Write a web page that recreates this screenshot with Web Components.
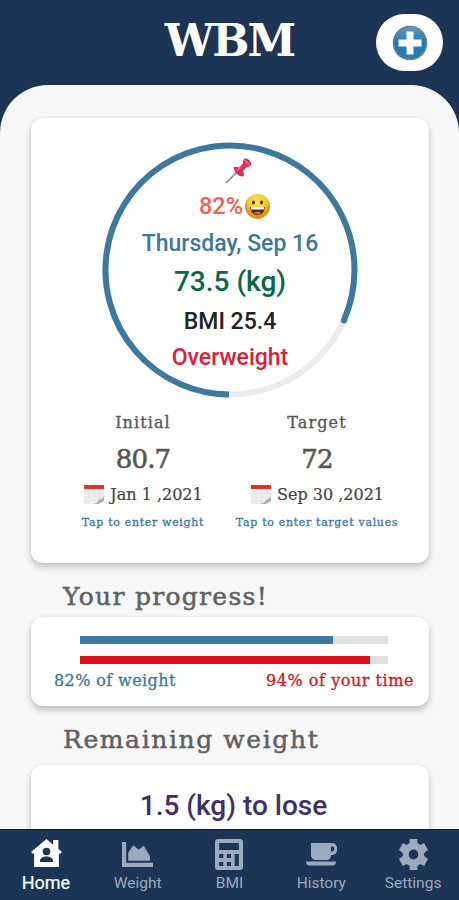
<!DOCTYPE html>
<html lang="en">
<head>
<meta charset="utf-8">
<meta name="viewport" content="width=device-width, initial-scale=1">
<title>WBM</title>
<style>
  body {
    margin: 0;
    font-family: Roboto, "Liberation Sans", sans-serif;
    background: #f7f7f7;
  }
</style>
</head>
<body>
<wbm-app></wbm-app>

<script>
  const SLAB = '"DejaVu Serif", "Liberation Serif", serif';

  const tabs = [
    { label: 'Home', active: true, icon: '<path d="M15 0 0 13l2 2 1-.7V28h24V14.300l1 .7 2-2-3.500-3V1h-5v4.700z"/><circle cx="15" cy="12.500" r="3.700" fill="#1c3557"/><path d="M8.500 23c0-4 3-5.500 6.500-5.500s6.500 1.500 6.500 5.500z" fill="#1c3557"/>', box: '0 0 30 28', w: 31, h: 28 },
    { label: 'Weight', icon: '<path d="M0 0h4v20h26v4H0z"/><path d="M6 18v-8l5-7 5 4.500 5-4 6 10V18z"/>', box: '0 0 30 24', w: 31, h: 25 },
    { label: 'BMI', icon: '<path fill-rule="evenodd" d="M3 0h21q3 0 3 3v25q0 3-3 3H3q-3 0-3-3V3q0-3 3-3zM4 4v7h19V4zM4 15v4h4v-4zm7.500 0v4h4v-4zm7.500 0v12h4V15zM4 23v4h4v-4zm7.500 0v4h4v-4z"/>', box: '0 0 27 31', w: 28, h: 31 },
    { label: 'History', icon: '<path fill-rule="evenodd" d="M5 0h21c7 0 7 12 0 12h-1c0 4-2 5-5 5h-9c-4 0-6-2-6-5zM25 3.500v5h1c3 0 3-5 0-5z"/><path d="M0 18.500h30q0 4-4 4H4q-4 0-4-4z"/>', box: '0 0 31 23', w: 31, h: 23 },
    { label: 'Settings', icon: '<path fill-rule="evenodd" d="M11 0h8v4l3 2 4-2 4 7-4 3v3l4 3-4 7-4-2-3 2v4h-8v-4l-3-2-4 2-4-7 4-3v-3l-4-3 4-7 4 2 3-2zM15 10.500a5 5 0 1 0 0 10 5 5 0 0 0 0-10z"/>', box: '0 0 30 31', w: 29, h: 31 },
  ];

  class AppHeader extends HTMLElement {
    constructor() {
      super();
      this.attachShadow({ mode: 'open' });
      this.shadowRoot.innerHTML = `
        <style>
          :host { display: grid; grid-template-columns: 83px 1fr 83px; height: 85px; background: #1c3557; }
          h1 {
            grid-column: 2; margin: 0; text-align: center; color: #fff;
            font: bold 44px/82px ${SLAB}; letter-spacing: -2px;
          }
          button {
            width: 67px; height: 57px; margin: 14px 0 0 0; padding: 0; border: 0;
            border-radius: 31px; background: #fff; display: grid; place-items: center;
          }
        </style>
        <h1><slot></slot></h1>
        <button aria-label="Add">
          <svg width="36" height="36" viewBox="0 0 36 36">
            <defs><linearGradient id="g" x2="0" y2="1"><stop stop-color="#5e9dc4"/><stop offset=".5" stop-color="#2377ae"/><stop offset="1" stop-color="#2681bb"/></linearGradient></defs>
            <circle cx="18" cy="18" r="16.500" fill="url(#g)" stroke="#687c8b" stroke-width="1.500"/>
            <path d="M14.500 6.500h7v8h8v7h-8v8h-7v-8h-8v-7h8z" fill="#fff"/>
          </svg>
        </button>
      `;
    }
  }
  customElements.define('app-header', AppHeader);

  class WhiteCard extends HTMLElement {
    constructor() {
      super();
      this.attachShadow({ mode: 'open' });
      this.shadowRoot.innerHTML = `
        <style>
          :host {
            display: block; box-sizing: border-box; background: #fff; border-radius: 12px;
            box-shadow: 0 4px 7px rgba(0, 0, 0, .22), 0 0 3px rgba(0, 0, 0, .06);
          }
        </style>
        <slot></slot>
      `;
    }
  }
  customElements.define('white-card', WhiteCard);

  class ProgressRing extends HTMLElement {
    constructor() {
      super();
      this.attachShadow({ mode: 'open' });
      // the arc starts at the bottom and runs clockwise
      this.shadowRoot.innerHTML = `
        <style>
          :host { display: grid; width: 256px; height: 256px; }
          svg.ring, .content { grid-area: 1 / 1; }
          .content { display: flex; flex-direction: column; align-items: center; white-space: nowrap; }
        </style>
        <svg class="ring" width="256" height="256" viewBox="0 0 256 256" fill="none" stroke-width="6">
          <circle cx="128" cy="128" r="124.500" stroke="#ececee"/>
          <path d="M127 252.500A124.500 124.500 0 1 1 242 178" stroke="#3d789d"/>
          <circle cx="242" cy="178.500" r="3" fill="#3d789d" stroke="none"/>
        </svg>
        <div class="content"><slot></slot></div>
      `;
    }
  }
  customElements.define('progress-ring', ProgressRing);

  class WeightColumn extends HTMLElement {
    constructor() {
      super();
      this.attachShadow({ mode: 'open' });
      this.shadowRoot.innerHTML = `
        <style>
          :host { display: flex; flex-direction: column; align-items: center; font-family: ${SLAB}; color: #555; white-space: nowrap; }
          .label { font-size: 16px; line-height: 22px; letter-spacing: 1.1px; -webkit-text-stroke: .3px; }
          .value { font-size: 26px; line-height: 32px; margin-top: 9px; letter-spacing: -.9px; -webkit-text-stroke: .6px; }
          .date { display: flex; align-items: center; gap: 5px; font-size: 16px; line-height: 22px; margin-top: 9px; color: #444; -webkit-text-stroke: .2px; }
          .hint { font-size: 11px; line-height: 16px; margin-top: 9px; color: #3d789d; letter-spacing: .68px; -webkit-text-stroke: .3px; }
        </style>
        <span class="label"><slot name="label"></slot></span>
        <span class="value"><slot name="value"></slot></span>
        <span class="date">
          <svg width="22" height="20" viewBox="0 0 22 20">
            <path d="M1 1h20l.500 14-5 4H.5z" fill="#efefef"/>
            <path d="M1 8h20M1 12h20M1 16h17M6 5v14M11 5v14M16 5v12" stroke="#dedede" stroke-width=".6"/>
            <path d="M1 0h20v4H1z" fill="#d9362b"/>
            <path d="M21 11.500v4.500l-6 3h-5q5-1 6-4 3-.5 5-3.500z" fill="#a9abaa"/>
          </svg>
          <slot name="date"></slot>
        </span>
        <span class="hint"><slot name="hint"></slot></span>
      `;
    }
  }
  customElements.define('weight-column', WeightColumn);

  class ProgressBar extends HTMLElement {
    constructor() {
      super();
      this.attachShadow({ mode: 'open' });
      this.shadowRoot.innerHTML = `
        <style>
          :host { display: block; height: 8px; background: #e0e0e0; }
          div { height: 100%; width: ${this.getAttribute('value')}%; background: ${this.getAttribute('color')}; }
        </style>
        <div></div>
      `;
    }
  }
  customElements.define('progress-bar', ProgressBar);

  class TabBar extends HTMLElement {
    constructor() {
      super();
      this.attachShadow({ mode: 'open' });
      const items = tabs.map(tab => `
        <a class="${tab.active ? 'active' : ''}">
          <span class="icon"><svg width="${tab.w}" height="${tab.h}" viewBox="${tab.box}" fill="currentColor" preserveAspectRatio="none">${tab.icon}</svg></span>
          <span class="label">${tab.label}</span>
        </a>
      `).join('');
      this.shadowRoot.innerHTML = `
        <style>
          :host { display: grid; grid-template-columns: repeat(5, 1fr); height: 70px; background: #1c3557; border-top: 1px solid #0b1844; }
          a { display: flex; flex-direction: column; align-items: center; color: #9daabd; font-size: 15.5px; }
          .icon { display: grid; place-items: center; height: 31px; margin-top: 9px; }
          .label { line-height: 20px; margin-top: 3px; }
          .active { color: #fff; font-size: 18px; }
          .active .icon { height: 28px; margin-left: 2px; }
          .active .label { margin-top: 6px; -webkit-text-stroke: .2px; }
        </style>
        ${items}
      `;
    }
  }
  customElements.define('tab-bar', TabBar);

  class WbmApp extends HTMLElement {
    constructor() {
      super();
      this.attachShadow({ mode: 'open' });
      this.shadowRoot.innerHTML = `
        <style>
          :host { display: flex; flex-direction: column; height: 900px; overflow: hidden; background: #1c3557; }
          main { flex: 1; min-height: 0; overflow: hidden; background: #f7f7f7; border-radius: 48px 48px 0 0; padding: 33px 30px 0 31px; }
          app-header, tab-bar { flex: none; }
          .summary { height: 445px; padding-top: 24px; }
          progress-ring { margin: 0 auto; }
          .pin { margin: 15px 0 0 17px; }
          .percent { display: flex; align-items: center; gap: 1px; height: 28px; margin: 8px 0 0 10px; font-size: 23.5px; font-weight: 500; color: #f55f50; }
          .day { font-size: 23px; line-height: 28px; font-weight: 500; margin-top: 10px; color: #3d7899; }
          .now { font-size: 28px; line-height: 32px; font-weight: 500; margin-top: 8px; color: #076943; }
          .bmi { font-size: 23px; line-height: 28px; font-weight: 500; margin-top: 10px; color: #222; }
          .status { font-size: 23px; line-height: 28px; font-weight: 500; margin-top: 8px; color: #dc203b; }
          .columns { display: grid; grid-template-columns: 174px 174px; justify-content: center; margin-top: 14px; }
          h2 { margin: 0; padding-left: 32px; font: 25px/34px ${SLAB}; color: #606060; white-space: nowrap; -webkit-text-stroke: .5px; }
          .progress-title { padding-top: 17px; letter-spacing: 1.3px; }
          .remaining-title { padding-top: 17px; letter-spacing: 1.6px; }
          .progress { height: 89px; margin-top: 3px; padding: 19px 15px 0 23px; }
          .bars { display: grid; gap: 12px; padding: 0 26px; }
          .captions { display: flex; justify-content: space-between; margin-top: 6px; font: 16px/22px ${SLAB}; white-space: nowrap; -webkit-text-stroke: .3px; }
          .w { color: #3d7899; letter-spacing: .4px; }
          .t { color: #d51320; letter-spacing: .55px; }
          .remaining { height: 120px; margin-top: 8px; padding: 24px 0 0 7px; text-align: center; font-size: 28px; line-height: 34px; font-weight: 500; color: #3d3068; }
        </style>
        <app-header>WBM</app-header>
        <main>
          <white-card class="summary">
            <progress-ring>
              <svg class="pin" width="28" height="27" viewBox="0 0 28 27">
                <path d="M1 26 12 15" stroke="#83868a" stroke-width="1.600"/>
                <path d="M19 2q2-2 5 1t2 6q-2 1-4 1l-4 4q2 4 0 5.500-4 0-6.500-3T8.500 10.500q2-1.500 5.500 0l4-4q-1-2 1-4.500z" fill="#d92d5a"/>
                <path d="m19.500 3 6 6M16 9l-4 5" stroke="#f0718f" stroke-width="1.300"/>
              </svg>
              <div class="percent"><span>82%</span>
                <svg width="27" height="27" viewBox="0 0 27 27">
                  <defs><radialGradient id="face" cy=".35"><stop stop-color="#ffe65c"/><stop offset=".7" stop-color="#fac936"/><stop offset="1" stop-color="#dc961d"/></radialGradient></defs>
                  <circle cx="13.500" cy="13.500" r="12.500" fill="url(#face)"/>
                  <ellipse cx="9.500" cy="9.500" rx="1.500" ry="2" fill="#49301c"/><ellipse cx="17.500" cy="9.500" rx="1.500" ry="2" fill="#49301c"/>
                  <path d="M6 14h15q-1 8-7.500 8T6 14z" fill="#572614"/><path d="M7 14h13v2.500H7z" fill="#fff"/><path d="M9.500 20q4-3 8 0-4 3-8 0z" fill="#df5a49"/>
                </svg>
              </div>
              <div class="day">Thursday, Sep 16</div>
              <div class="now">73.5 (kg)</div>
              <div class="bmi">BMI 25.4</div>
              <div class="status">Overweight</div>
            </progress-ring>
            <div class="columns">
              <weight-column>
                <span slot="label">Initial</span>
                <span slot="value">80.7</span>
                <span slot="date">Jan 1 ,2021</span>
                <span slot="hint">Tap to enter weight</span>
              </weight-column>
              <weight-column>
                <span slot="label">Target</span>
                <span slot="value">72</span>
                <span slot="date">Sep 30 ,2021</span>
                <span slot="hint">Tap to enter target values</span>
              </weight-column>
            </div>
          </white-card>
          <h2 class="progress-title">Your progress!</h2>
          <white-card class="progress">
            <div class="bars">
              <progress-bar value="82" color="#3d789f"></progress-bar>
              <progress-bar value="94" color="#dc0f1b"></progress-bar>
            </div>
            <div class="captions"><span class="w">82% of weight</span><span class="t">94% of your time</span></div>
          </white-card>
          <h2 class="remaining-title">Remaining weight</h2>
          <white-card class="remaining">1.5 (kg) to lose</white-card>
        </main>
        <tab-bar></tab-bar>
      `;
    }
  }
  customElements.define('wbm-app', WbmApp);
</script>
</body>
</html>
